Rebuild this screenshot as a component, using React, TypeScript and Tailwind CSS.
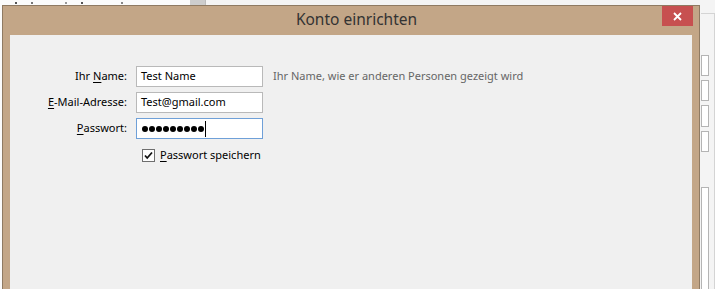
import React from "react";

const font = { fontFamily: '"Noto Sans", "Open Sans", Arial, sans-serif' };

function U({ children }: { children: React.ReactNode }) {
  return <span className="underline decoration-1 underline-offset-[2px]">{children}</span>;
}

function BackgroundWindow() {
  return (
    <div className="absolute inset-0 flex bg-[#f0f0f0]">
      {/* left list pane */}
      <div className="w-[190px] h-full bg-[#fbfbfb] flex items-start gap-[14px] pl-[15px] pt-[2px]">
        <span className="w-[2px] h-[2px] bg-[#555]" />
        <span className="w-[2px] h-[2px] bg-[#777]" />
        <span className="w-[2px] h-[2px] bg-[#999] ml-[18px]" />
        <span className="w-[2px] h-[2px] bg-[#555]" />
        <span className="w-[2px] h-[2px] bg-[#888] ml-[24px]" />
      </div>
      {/* scrollbar */}
      <div className="w-[16px] h-full bg-[#f0f0f0] border-r border-[#bdbdbd]">
        <div className="h-[6px] bg-[#cdcdcd]" />
      </div>
      <div className="flex-1 h-full bg-[#f4f4f4] flex justify-end">
        <div className="w-[14px] mt-[13px] h-full border-t border-r border-[#d4d4d4] flex flex-col pt-[41px]">
          <div className="w-[8px] h-[22px] bg-white border border-[#b4b4b4]" />
          <div className="w-[8px] h-[22px] mt-[4px] bg-white border border-[#b4b4b4]" />
          <div className="w-[8px] h-[22px] mt-[4px] bg-white border border-[#b4b4b4]" />
          <div className="w-[8px] h-[22px] mt-[4px] bg-white border border-[#b4b4b4]" />
          <div className="w-[8px] h-[120px] mt-[35px] bg-white border border-[#b4b4b4]" />
        </div>
      </div>
    </div>
  );
}

function Checkbox() {
  return (
    <svg width="13" height="13" viewBox="0 0 13 13" className="shrink-0">
      <rect x="0.5" y="0.5" width="12" height="12" fill="#fdfdfd" stroke="#6e6e6e" />
      <path d="M3 6.5 L5.2 9 L10 3.5" fill="none" stroke="#111" strokeWidth="1.8" />
    </svg>
  );
}

export default function App() {
  return (
    <div className="relative w-[715px] h-[289px] overflow-hidden" style={font}>
      <BackgroundWindow />
      {/* dialog window */}
      <div className="absolute left-[2px] top-[5px] w-[698px] h-[300px] bg-[#c3a687] border border-[#8f7a62] flex flex-col">
        <div className="relative h-[29px] shrink-0 flex items-center justify-center">
          <span className="text-[15.5px] text-[#333] mt-[-1px] ml-[11px]">Konto einrichten</span>
          <div className="absolute right-[6px] top-0 w-[31px] h-[20px] bg-[#c75050] flex items-center justify-center">
            <svg width="9" height="9" viewBox="0 0 9 9">
              <path d="M1 1 L8 8 M8 1 L1 8" stroke="#fff" strokeWidth="1.8" />
            </svg>
          </div>
        </div>
        <div className="flex-1 mx-[7px] bg-[#f0f0f0] pt-[31px] text-[11px] text-black">
          <div className="flex flex-col gap-[5px]">
            <div className="flex items-center h-[21px]">
              <div className="w-[126px] pr-[9px] text-right">Ihr <U>N</U>ame:</div>
              <div className="w-[127px] h-[21px] bg-white border border-[#b9b9b9] pl-[4px] flex items-center">Test Name</div>
              <div className="ml-[10px] text-[#666]">Ihr Name, wie er anderen Personen gezeigt wird</div>
            </div>
            <div className="flex items-center h-[21px]">
              <div className="w-[126px] pr-[9px] text-right"><U>E</U>-Mail-Adresse:</div>
              <div className="w-[127px] h-[21px] bg-white border border-[#b9b9b9] pl-[4px] flex items-center">Test@gmail.com</div>
            </div>
            <div className="flex items-center h-[21px]">
              <div className="w-[126px] pr-[9px] text-right"><U>P</U>asswort:</div>
              <div className="w-[127px] h-[21px] bg-white border border-[#6fa0d8] pl-[5px] flex items-center">
                <div className="flex gap-[1px]">
                  {Array.from({ length: 9 }).map((_, i) => (
                    <span key={i} className="w-[6px] h-[6px] rounded-full bg-black" />
                  ))}
                </div>
                <span className="ml-[1px] w-[1px] h-[16px] bg-black" />
              </div>
            </div>
          </div>
          <div className="flex items-center mt-[8px] ml-[132px] gap-[5px]">
            <Checkbox />
            <span><U>P</U>asswort speichern</span>
          </div>
        </div>
      </div>
    </div>
  );
}
